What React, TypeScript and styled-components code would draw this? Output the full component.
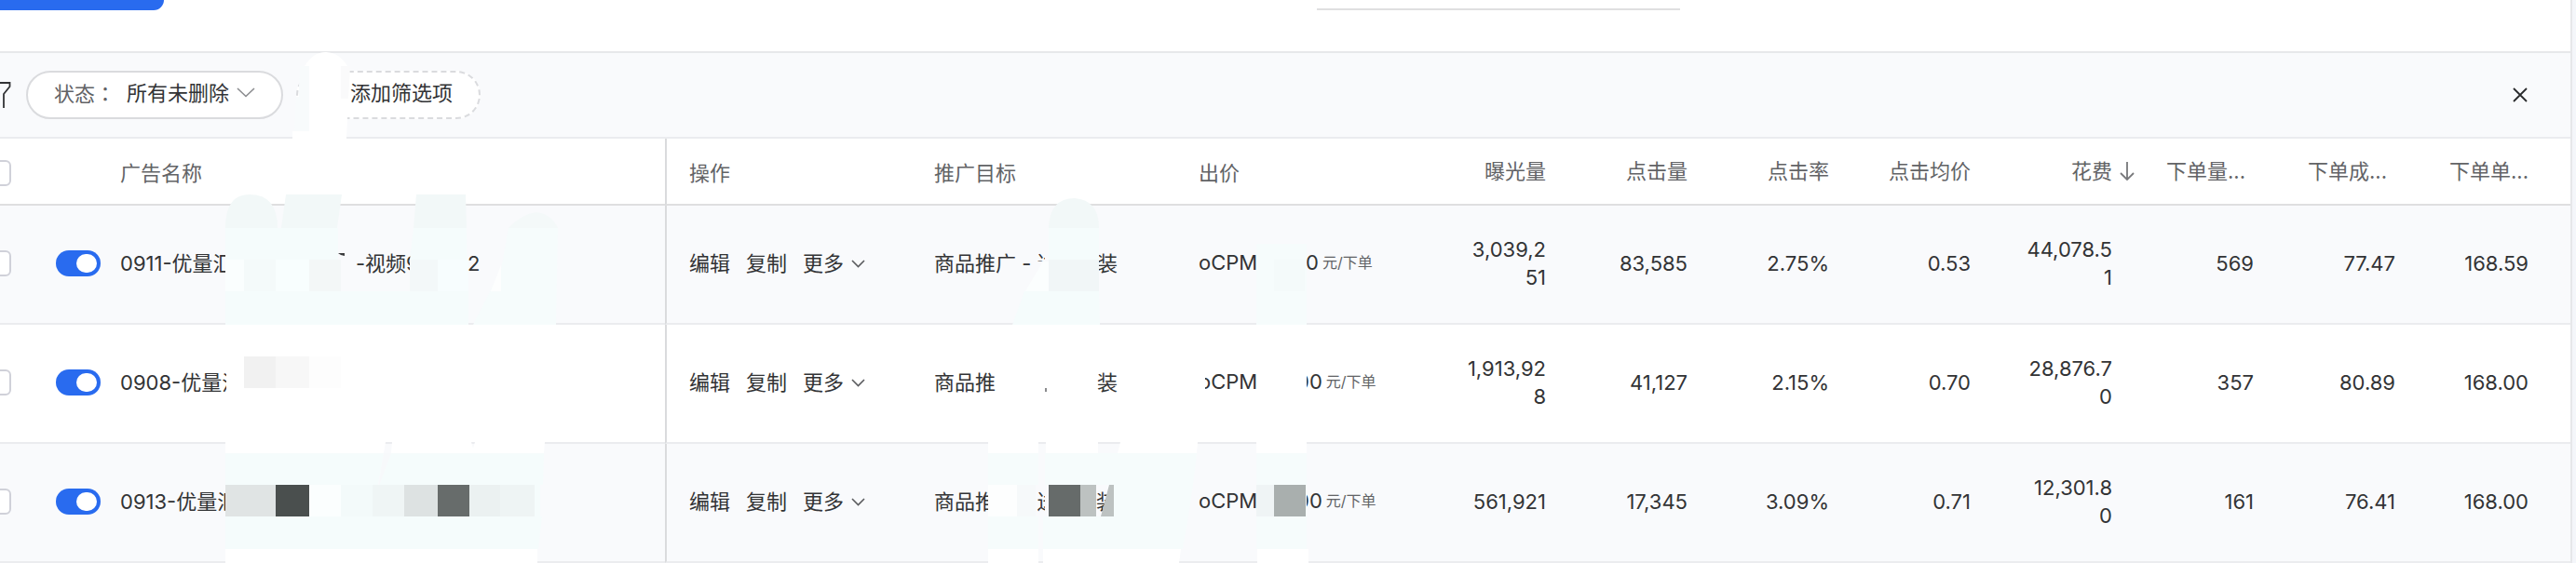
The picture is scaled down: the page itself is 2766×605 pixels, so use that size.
import React from 'react';
import styled, { createGlobalStyle } from 'styled-components';

const GlobalStyle = createGlobalStyle`
  * { box-sizing: border-box; }
  body {
    margin: 0;
    background: #f4f6fa;
    color: #323335;
    font-family: Inter, 'Noto Sans CJK SC', sans-serif;
    font-size: 22px;
    line-height: 30px;
  }
  button, input { font: inherit; color: inherit; margin: 0; }
`;

const Page = styled.main`
  position: relative;
  margin-right: 4px;
  border-right: 2px solid #e6e7ea;
  background: #fff;
  overflow: hidden;
`;

const TopBar = styled.div`
  display: flex;
  align-items: flex-start;
  height: 55px;
`;

const PrimaryButton = styled.button`
  width: 176px;
  height: 11px;
  border: 0;
  padding: 0;
  border-radius: 0 0 12px 0;
  background: #296bef;
`;

const TopField = styled.input`
  width: 390px;
  height: 11px;
  margin-left: 1238px;
  padding: 0;
  border: 0;
  border-bottom: 2px solid #dfdfe0;
  background: #fff;
`;

const FilterBar = styled.div`
  display: flex;
  align-items: center;
  height: 94px;
  padding-right: 46px;
  border-top: 2px solid #e7e8ea;
  border-bottom: 2px solid #ebecef;
  background: #f9fafc;
`;

const Pill = styled.button<{ $dashed?: boolean }>`
  display: flex;
  align-items: center;
  justify-content: ${(p) => (p.$dashed ? 'flex-end' : 'flex-start')};
  gap: 12px;
  height: 52px;
  width: ${(p) => (p.$dashed ? 198 : 276)}px;
  margin-left: ${(p) => (p.$dashed ? 14 : 16)}px;
  padding: 0 28px;
  padding-bottom: 5px;
  border: 2px ${(p) => (p.$dashed ? 'dashed' : 'solid')} #dadbde;
  border-radius: 26px;
  background: #fff;
  white-space: nowrap;
`;

const Muted = styled.span`
  color: #626366;
`;

const Colon = styled.span`
  font-family: 'Noto Sans CJK TC', sans-serif;
`;

const Selected = styled.span`
  display: flex;
  align-items: center;
  gap: 8px;
`;

const IconButton = styled.button`
  display: flex;
  margin-left: auto;
  padding: 0;
  border: 0;
  background: none;
`;

const Table = styled.table`
  width: 100%;
  table-layout: fixed;
  border-collapse: separate;
  border-spacing: 0;
`;

const Col = styled.col<{ $w?: number }>`
  width: ${(p) => (p.$w ? p.$w + 'px' : 'auto')};
`;

const HeadCell = styled.th<{ $line?: boolean }>`
  height: 72px;
  padding: 3px 0 0 ${(p) => (p.$line ? 24 : 18)}px;
  border-bottom: 2px solid #dfdfe0;
  ${(p) => p.$line && 'border-left: 2px solid #dadbdd;'}
  font-weight: 400;
  text-align: left;
  color: #626366;
  white-space: nowrap;
`;

const NumHead = styled(HeadCell)<{ $last?: boolean; $clipped?: boolean }>`
  padding: 0 ${(p) => (p.$last ? 44 : 18)}px 0 ${(p) => (p.$clipped ? 40 : 0)}px;
  text-align: ${(p) => (p.$clipped ? 'left' : 'right')};
`;

const SortLabel = styled.span`
  display: flex;
  align-items: center;
  justify-content: flex-end;
  gap: 8px;
  margin-right: -24px;
`;

const Row = styled.tr`
  &:nth-child(odd) { background: #f9fafc; }
`;

const Cell = styled.td<{ $line?: boolean }>`
  height: 128px;
  padding: 0 0 2px ${(p) => (p.$line ? 24 : 18)}px;
  border-bottom: 2px solid #ebecef;
  ${(p) => p.$line && 'border-left: 2px solid #dadbdd;'}
  white-space: nowrap;
`;

const BareCell = styled(Cell)`
  padding: 0 0 2px;
`;

const BareHead = styled(HeadCell)`
  padding: 4px 0 0;
`;

const NumCell = styled(Cell)<{ $last?: boolean }>`
  padding: 0 ${(p) => (p.$last ? 45 : 18)}px 2px 0;
  text-align: right;
  white-space: pre-line;
`;

const Check = styled.input`
  display: block;
  appearance: none;
  width: 28px;
  height: 28px;
  margin-left: -16px;
  border: 2px solid #d0d1d9;
  border-radius: 6px;
  background: #fff;
`;

const Toggle = styled.input`
  display: block;
  appearance: none;
  width: 48px;
  height: 28px;
  padding: 4px;
  border-radius: 14px;
  background: #296bef;
  &::before {
    content: '';
    display: block;
    width: 22px;
    height: 20px;
    margin-left: auto;
    border-radius: 10px;
    background: #fff;
  }
`;

const Line = styled.div`
  display: flex;
  align-items: center;
`;

const BidLine = styled(Line)`
  padding-bottom: 2px;
`;

const Actions = styled(Line)`
  gap: 17px;
`;

const Action = styled.button`
  display: flex;
  align-items: center;
  gap: 8px;
  padding: 0;
  border: 0;
  background: none;
`;

/* A visible run of partly redacted text: $w is its slot, $gap is the hidden stretch before it. */
const Fragment = styled.span<{ $w?: number; $gap?: number }>`
  flex: none;
  white-space: pre;
  width: ${(p) => (p.$w ? p.$w + 'px' : 'auto')};
  margin-left: ${(p) => p.$gap ?? 0}px;
`;

const Unit = styled.span`
  margin-left: 4px;
  font-size: 16px;
  color: #626366;
`;

const Redaction = styled.svg`
  position: absolute;
  top: 0;
  left: 0;
  pointer-events: none;
`;

const Chevron = ({ w, h, color }: { w: number; h: number; color: string }) => (
  <svg width={w} height={h} viewBox={`0 0 ${w} ${h}`} fill="none" stroke={color} strokeWidth="1.6">
    <path d={`M1 1 L${w / 2} ${h - 1.5} L${w - 1} 1`} />
  </svg>
);

type Run = { text: string; w?: number; gap?: number };
type Ad = { id: string; name: Run[]; goal: Run[]; price: Run; nums: string[] };

const ads: Ad[] = [
  {
    id: '0911',
    name: [{ text: '0911-优量汇', w: 113 }, { text: '-视频9', gap: 140, w: 57 }, { text: '2', gap: 63 }],
    goal: [{ text: '商品推广 - 送', w: 119 }, { text: '装', gap: 56 }],
    price: { text: '0', gap: 54 },
    nums: ['3,039,2\n51', '83,585', '2.75%', '0.53', '44,078.5\n1', '569', '77.47', '168.59'],
  },
  {
    id: '0908',
    name: [{ text: '0908-优量汇', w: 113 }],
    goal: [{ text: '商品推', w: 65 }, { text: '装', gap: 110 }],
    price: { text: '00', gap: 44 },
    nums: ['1,913,92\n8', '41,127', '2.15%', '0.70', '28,876.7\n0', '357', '80.89', '168.00'],
  },
  {
    id: '0913',
    name: [{ text: '0913-优量汇', w: 113 }],
    goal: [{ text: '商品推广 - 送', w: 119 }, { text: '装', gap: 55 }],
    price: { text: '00', gap: 44 },
    nums: ['561,921', '17,345', '3.09%', '0.71', '12,301.8\n0', '161', '76.41', '168.00'],
  },
];

const Runs = ({ runs }: { runs: Run[] }) => (
  <Line>
    {runs.map((r) => (
      <Fragment key={r.text} $w={r.w} $gap={r.gap}>{r.text}</Fragment>
    ))}
  </Line>
);

/* [x, y, width, height, fill] */
const blocks: [number, number, number, number, string][] = [
  [242, 279, 20, 34, '#fafefe'],
  [262, 279, 34, 34, '#f4fafa'],
  [296, 279, 36, 34, '#f8fefe'],
  [332, 279, 34, 34, '#f3f7f7'],
  [440, 279, 30, 34, '#f3f8f9'],
  [470, 279, 33, 34, '#f7fdfe'],
  [243, 390, 19, 40, '#ffffff'],
  [262, 383, 34, 34, '#f1f1f1'],
  [296, 383, 36, 34, '#f7f7f7'],
  [332, 383, 34, 34, '#fdfdfd'],
  [242, 521, 54, 34, '#e0e4e4'],
  [296, 521, 36, 34, '#4a4f4e'],
  [332, 521, 34, 34, '#fbfefe'],
  [366, 521, 34, 34, '#f3fafa'],
  [400, 521, 34, 34, '#eff5f5'],
  [434, 521, 36, 34, '#dde2e2'],
  [470, 521, 34, 34, '#676c6b'],
  [504, 521, 33, 34, '#ebf1f1'],
  [537, 521, 37, 34, '#eef4f4'],
  [574, 521, 6, 34, '#f5fcfc'],
  [242, 590, 335, 15, '#ffffff'],
  [1126, 245, 54, 34, '#f5fcfc'],
  [1122, 266, 4, 15, '#f9fafc'],
  [1126, 279, 54, 34, '#f1f6f7'],
  [1349, 262, 54, 87, '#f6fcfc'],
  [1368, 279, 33, 34, '#f4fafa'],
  [1122, 417, 2, 4, '#8a8b8d'],
  [1285, 396, 9, 30, '#ffffff'],
  [1349, 390, 54, 40, '#ffffff'],
  [1061, 475, 54, 12, '#ffffff'],
  [1123, 475, 56, 12, '#ffffff'],
  [1349, 475, 54, 12, '#ffffff'],
  [1061, 487, 54, 34, '#f6fcfc'],
  [1061, 555, 54, 35, '#f6fcfc'],
  [1061, 521, 31, 34, '#fdfefe'],
  [1092, 521, 20, 34, '#f6f9fa'],
  [1122, 521, 4, 34, '#f9fafc'],
  [1126, 521, 34, 34, '#666b6a'],
  [1160, 521, 17, 34, '#bdc2c1'],
  [1061, 590, 54, 15, '#ffffff'],
  [1349, 487, 54, 103, '#f6fcfc'],
  [1349, 521, 19, 34, '#eff4f5'],
  [1368, 521, 34, 34, '#a9afae'],
  [1350, 590, 55, 15, '#ffffff'],
];

const shapes: [string, string][] = [
  ['M322 71H334V90H322Z', '#f9fafc'],
  ['M321 92L322 71H334V141H316L318 104H321Z', '#f8fbfc'],
  ['M366 71H376L374 106H366Z', '#fafafb'],
  ['M327 71Q336 56 350 56Q365 57 373 71H366V106H374L372 149H314V141H332V71Z', '#ffffff'],
  ['M242 245Q242 209 268 209Q298 209 298 245Z', '#f2f8f8'],
  ['M307 209H367L362 245H302Z', '#f2f8f8'],
  ['M447 209H500L501 245H444Z', '#f2f8f8'],
  ['M546 245Q560 230 576 228Q592 230 599 245Z', '#f4f9f9'],
  ['M242 245H363V279H366V313H503V349H242Z', '#f5fcfc'],
  ['M444 245H501L503 349H440V279Z', '#f5fcfc'],
  ['M546 245H599L597 349H508L538 290Z', '#f6fcfc'],
  ['M538 285V313H527Z', '#fdfefe'],
  ['M363 272H370V275L366 274Z', '#3a3b3d'],
  ['M242 475H414L412 487H242Z', '#ffffff'],
  ['M421 475H506L508 482L510 475H585L584 487H420Z', '#ffffff'],
  ['M242 487H412L405 525L420 487H584L583 521H242Z', '#f5fcfc'],
  ['M242 555H582L578 590H242Z', '#f5fcfc'],
  ['M412 487H420L406 525Z', '#f7f9fb'],
  ['M1126 245Q1127 213 1154 213Q1180 215 1180 245Z', '#f2f8f8'],
  ['M1108 281H1126V313H1098Z', '#f9fafc'],
  ['M1120 281H1126V313H1101Z', '#fbfefe'],
  ['M1100 313H1180L1181 349H1087Z', '#f5fcfc'],
  ['M1203 475H1286L1285 487H1200Z', '#ffffff'],
  ['M1122 487H1285L1281 521H1122Z', '#f6fcfc'],
  ['M1196 521H1281L1276 555H1196Z', '#f6fcfc'],
  ['M1120 555H1276L1270 590H1120Z', '#f6fcfc'],
  ['M1120 590H1268L1266 605H1120Z', '#ffffff'],
  ['M1191 521H1196V555H1182Z', '#bdc2c1'],
];

export default function App() {
  return (
    <>
      <GlobalStyle />
      <Page>
        <TopBar>
          <PrimaryButton aria-label="新建" />
          <TopField aria-label="搜索" />
        </TopBar>

        <FilterBar>
          <svg width="12" height="28" viewBox="0 0 12 28" fill="none" stroke="#323335" strokeWidth="1.8">
            <path d="M-14 1 H10.5 V5 L4 13 V28" />
          </svg>
          <Pill>
            <Muted>状态<Colon>：</Colon></Muted>
            <Selected>
              所有未删除
              <Chevron w={20} h={11} color="#8b8c8f" />
            </Selected>
          </Pill>
          <Pill $dashed>添加筛选项</Pill>
          <IconButton aria-label="关闭">
            <svg width="16" height="16" viewBox="0 0 16 16" fill="none" stroke="#2a2b2d" strokeWidth="1.8">
              <path d="M1 1 L15 15 M15 1 L1 15" />
            </svg>
          </IconButton>
        </FilterBar>

        <Table>
          <colgroup>
            <Col $w={60} />
            <Col $w={51} />
            <Col $w={603} />
            <Col $w={271} />
            <Col $w={284} />
            <Col />
            {[152, 152, 152, 152, 152, 152, 152, 170].map((w, i) => (
              <Col key={i} $w={w} />
            ))}
          </colgroup>
          <thead>
            <tr>
              <BareHead><Check type="checkbox" aria-label="全选" /></BareHead>
              <BareHead />
              <HeadCell>广告名称</HeadCell>
              <HeadCell $line>操作</HeadCell>
              <HeadCell>推广目标</HeadCell>
              <HeadCell>出价</HeadCell>
              <NumHead>曝光量</NumHead>
              <NumHead>点击量</NumHead>
              <NumHead>点击率</NumHead>
              <NumHead>点击均价</NumHead>
              <NumHead>
                <SortLabel>
                  花费
                  <svg width="16" height="20" viewBox="0 0 16 20" fill="none" stroke="#77787b" strokeWidth="1.8">
                    <path d="M8 0 V18.5 M1 12 L8 19 L15 12" />
                  </svg>
                </SortLabel>
              </NumHead>
              <NumHead $clipped>下单量...</NumHead>
              <NumHead $clipped>下单成...</NumHead>
              <NumHead $clipped $last>下单单...</NumHead>
            </tr>
          </thead>
          <tbody>
            {ads.map((ad) => (
              <Row key={ad.id}>
                <BareCell><Check type="checkbox" aria-label={ad.id} /></BareCell>
                <BareCell><Toggle type="checkbox" role="switch" defaultChecked aria-label={ad.id} /></BareCell>
                <Cell><Runs runs={ad.name} /></Cell>
                <Cell $line>
                  <Actions>
                    <Action>编辑</Action>
                    <Action>复制</Action>
                    <Action>更多<Chevron w={15} h={9} color="#5b5c5f" /></Action>
                  </Actions>
                </Cell>
                <Cell><Runs runs={ad.goal} /></Cell>
                <Cell>
                  <BidLine>
                    <Fragment $w={61}>oCPM</Fragment>
                    <Fragment $gap={ad.price.gap}>{ad.price.text}</Fragment>
                    <Unit>元/下单</Unit>
                  </BidLine>
                </Cell>
                {ad.nums.map((n, i) => (
                  <NumCell key={i} $last={i === 7}>{n}</NumCell>
                ))}
              </Row>
            ))}
          </tbody>
        </Table>

        <Redaction width="1430" height="605" viewBox="0 0 1430 605" aria-hidden="true">
          {shapes.map(([d, fill]) => (
            <path key={d} d={d} fill={fill} />
          ))}
          {blocks.map(([x, y, w, h, fill]) => (
            <rect key={`${x}-${y}`} x={x} y={y} width={w} height={h} fill={fill} />
          ))}
        </Redaction>
      </Page>
    </>
  );
}
